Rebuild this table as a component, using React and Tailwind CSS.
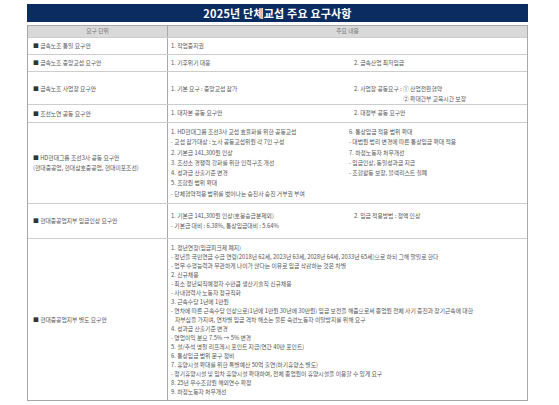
import React from "react";

const font = { fontFamily: '"Noto Sans CJK KR", "Noto Sans", sans-serif' };

function Row({ h, label, children, top = false }) {
  return (
    <div className={`grid grid-cols-[140px_1fr] border-t border-[#cdcdcd] ${h}`}>
      <div
        className={`border-r border-[#a9a9a9] pl-[5px] flex flex-col ${
          top ? "justify-start pt-[12px]" : "justify-center"
        } text-[5.8px] leading-[10px] text-[#555]`}
      >
        {label}
      </div>
      <div
        className={`pl-[3px] flex flex-col ${
          top ? "justify-start pt-[12px]" : "justify-center"
        } text-[5.8px] text-[#555]`}
      >
        {children}
      </div>
    </div>
  );
}

function Label({ children }) {
  return (
    <div className="whitespace-nowrap">
      <span className="text-[#333]">■</span> {children}
    </div>
  );
}

function Lines({ items, lh = "leading-[10px]" }) {
  return (
    <div className={lh}>
      {items.map((t, i) => (
        <div key={i} className="whitespace-nowrap">
          {t}
        </div>
      ))}
    </div>
  );
}

export default function App() {
  return (
    <div className="w-[559px] h-[405px] bg-white pt-[4px] pl-[27px]" style={font}>
      <div className="w-[501px]">
        <div className="h-[18px] bg-[#0b2c61] flex items-center justify-center text-white font-bold text-[11px] tracking-[0.2px]">
          2025년 단체교섭 주요 요구사항
        </div>
        <div className="mt-[3px] border border-[#a9a9a9]">
          <div className="grid grid-cols-[140px_1fr] h-[11px] bg-[#d9d9d9] text-[5.8px] text-[#777]">
            <div className="border-r border-[#a9a9a9] flex items-center justify-center">요구 단위</div>
            <div className="flex items-center justify-center">주요 내용</div>
          </div>

          <Row h="h-[17px]" label={<Label>금속노조 통일 요구안</Label>}>
            <div>1. 작업중지권</div>
          </Row>

          <Row h="h-[17px]" label={<Label>금속노조 중앙교섭 요구안</Label>}>
            <div className="grid grid-cols-[183px_1fr]">
              <div>1. 기후위기 대응</div>
              <div>2. 금속산업 최저임금</div>
            </div>
          </Row>

          <Row h="h-[33px]" top label={<Label>금속노조 사업장 요구안</Label>}>
            <div className="grid grid-cols-[183px_1fr] leading-[10px]">
              <div>1. 기본 요구 : 중앙교섭 참가</div>
              <div className="flex whitespace-nowrap">
                <span>2. 사업장 공동요구 :&nbsp;</span>
                <span className="flex flex-col">
                  <span>① 산업전환협약</span>
                  <span>② 확대간부 교육시간 보장</span>
                </span>
              </div>
            </div>
          </Row>

          <Row h="h-[18px]" label={<Label>조선노연 공동 요구안</Label>}>
            <div className="grid grid-cols-[183px_1fr]">
              <div>1. 대자본 공동 요구안</div>
              <div>2. 대정부 공동 요구안</div>
            </div>
          </Row>

          <Row
            h="h-[81px]"
            label={
              <>
                <Label>HD현대그룹 조선3사 공동 요구안</Label>
                <div className="whitespace-nowrap">(현대중공업, 현대삼호중공업, 현대미포조선)</div>
              </>
            }
          >
            <div className="grid grid-cols-[178px_1fr] items-start">
              <Lines
                lh="leading-[10.2px]"
                items={[
                  "1. HD현대그룹 조선3사 교섭 효율화를 위한 공동교섭",
                  "- 교섭 참가대상 : 노사 공동교섭위원 각 7인 구성",
                  "2. 기본급 141,300원 인상",
                  "3. 조선소 경쟁력 강화를 위한 인력구조 개선",
                  "4. 성과급 산출기준 변경",
                  "5. 조합원 범위 확대",
                  "- 단체협약적용 범위를 벗어나는 승진사 승진 거부권 부여",
                ]}
              />
              <Lines
                lh="leading-[10.2px]"
                items={[
                  "6. 통상임금 적용 범위 확대",
                  "- 대법원 법리 변경에 따른 통상임금 확대 적용",
                  "7. 하청노동자 처우개선",
                  "- 임금인상, 동일성과금 지급",
                  "- 조합활동 보장, 블랙리스트 철폐",
                ]}
              />
            </div>
          </Row>

          <Row h="h-[35px]" label={<Label>현대중공업지부 임금인상 요구안</Label>}>
            <div className="grid grid-cols-[183px_1fr] items-start">
              <Lines
                items={[
                  "1. 기본급 141,300원 인상(호봉승급분제외)",
                  "- 기본급 대비 : 6.38%, 통상임금대비 : 5.64%",
                ]}
              />
              <div className="leading-[10px]">2. 임금 적용방법 : 정액 인상</div>
            </div>
          </Row>

          <Row h="h-[162px]" label={<Label>현대중공업지부 별도 요구안</Label>}>
            <Lines
              lh="leading-[9px]"
              items={[
                "1. 정년연장(임금피크제 폐지)",
                "- 정년을 국민연금 수급 연령(2018년 62세, 2023년 63세, 2028년 64세, 2033년 65세)으로 하되 그해 말일로 한다",
                "- 업무 수행능력과 무관하게 나이가 많다는 이유로 임금 삭감하는 것은 차별",
                "2. 신규채용",
                "- 최소 정년퇴직예정자 수만큼 생산기술직 신규채용",
                "- 사내협력사 노동자 정규직화",
                "3. 근속수당 1년에 1만원",
                "- 연차에 따른 근속수당 인상으로(1년에 1만원 30년에 30만원) 임금 보전을 해줌으로써 종업원 전체 사기 증진과 장기근속에 대한",
                "\u00a0\u00a0\u00a0자부심을 가지며, 연차별 임금 격차 해소는 물론 숙련노동자 이탈방지를 위해 요구",
                "4. 성과금 산출기준 변경",
                "- 영업이익 분모 7.5% → 5% 변경",
                "5. 설/추석 명절 리프레시 포인트 지급(연간 40만 포인트)",
                "6. 통상임금 범위 문구 정비",
                "7. 휴양시설 확대를 위한 특별예산 50억 출연(하기휴양소 별도)",
                "- 정기휴양시설 및 임차 휴양시설 확대하여, 전체 종업원이 휴양시설을 이용할 수 있게 요구",
                "8. 25년 우수조합원 해외연수 확정",
                "9. 하청노동자 처우개선",
              ]}
            />
          </Row>
        </div>
      </div>
    </div>
  );
}
